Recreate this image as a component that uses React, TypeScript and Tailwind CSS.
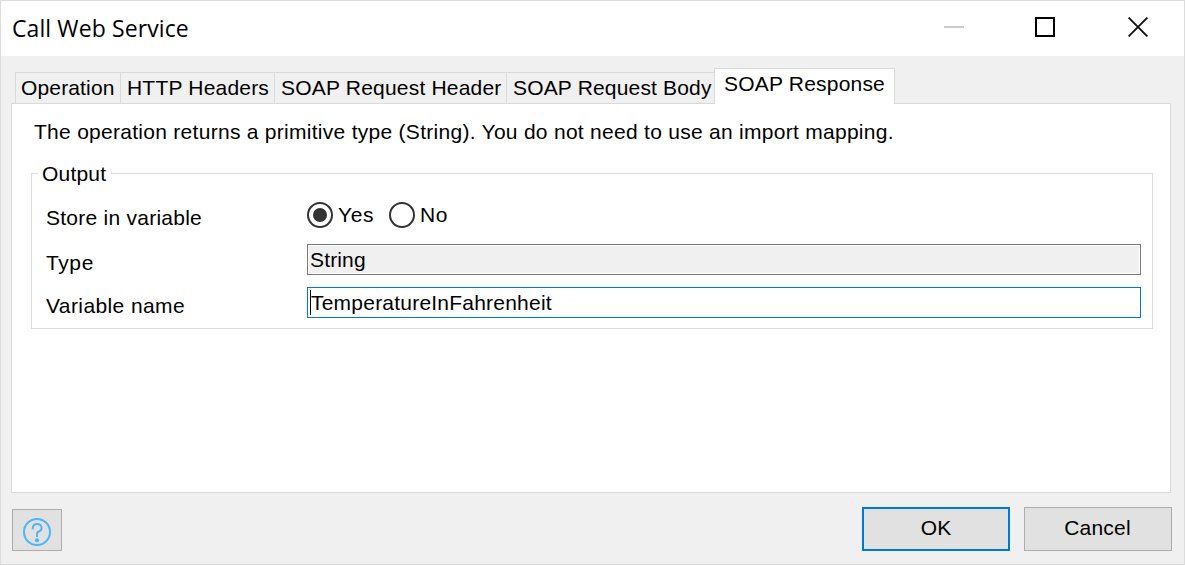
import { useState } from 'react';

const tabs = [
  { label: 'Operation', box: 'w-[106px] border-x pl-[5px] tracking-[0.15px]' },
  { label: 'HTTP Headers', box: 'w-[154px] border-r pl-[6px] tracking-[0.2px]' },
  { label: 'SOAP Request Header', box: 'w-[232px] border-r pl-[6px] tracking-[0.2px]' },
  { label: 'SOAP Request Body', box: 'w-[207px] pl-[6px] tracking-[0.17px]' },
];

function TitleBar() {
  return (
    <header className="flex h-[55px] shrink-0 items-start bg-white pl-[11px] pr-[36px]">
      <h1 className="mt-[11px] grow whitespace-nowrap font-['Open_Sans',sans-serif] text-[23px] leading-8 tracking-[0.1px]">
        Call Web Service
      </h1>
      <div className="flex pt-4">
        <button aria-label="Minimize" className="mr-[71px] flex h-5 w-5 items-center">
          <span className="block h-[2px] w-5 bg-[#cccccc]" />
        </button>
        <button aria-label="Maximize" className="mr-[73px] h-5 w-5 border-2 border-black" />
        <button aria-label="Close" className="h-5 w-5">
          <svg className="block" width="20" height="20" viewBox="0 0 20 20" stroke="#111" strokeWidth="1.9">
            <path d="M0.6 0.6L19.4 19.4M19.4 0.6L0.6 19.4" />
          </svg>
        </button>
      </div>
    </header>
  );
}

function TabStrip() {
  return (
    <nav className="flex h-9 items-end pl-1">
      {tabs.map((tab) => (
        <div key={tab.label} className={`mb-px h-[31px] whitespace-nowrap border-t border-[#dadada] pt-[3px] ${tab.box}`}>
          {tab.label}
        </div>
      ))}
      <div className="relative z-10 h-9 w-[181px] whitespace-nowrap border-x border-t border-[#dadada] bg-white pl-[9px] pt-[3px] tracking-[0.2px]">
        SOAP Response
      </div>
    </nav>
  );
}

function Radio({ checked, onSelect, label }: { checked: boolean; onSelect: () => void; label: string }) {
  return (
    <button role="radio" aria-checked={checked} onClick={onSelect} className="flex items-center gap-[5px]">
      <svg width="26" height="26" viewBox="0 0 26 26">
        <circle cx="13" cy="13" r="12" fill="white" stroke="#333" strokeWidth="2" />
        {checked && <circle cx="13" cy="13" r="7" fill="#333" />}
      </svg>
      <span className="tracking-[0.6px]">{label}</span>
    </button>
  );
}

export default function App() {
  const [store, setStore] = useState(true);
  return (
    <div className="flex h-[565px] w-[1185px] flex-col overflow-hidden border border-[#dcdcdc] bg-[#f0f0f0] font-['Liberation_Sans',Arial,sans-serif] text-[21px] leading-6 text-black">
      <TitleBar />
      <main className="flex grow flex-col px-[10px] pt-3">
        <TabStrip />
        <section className="-mt-px flex h-[390px] w-[1160px] flex-col border border-[#dadada] bg-white pl-[19px] pt-4">
          <p className="ml-[3px] whitespace-nowrap tracking-[0.28px]">
            The operation returns a primitive type (String). You do not need to use an import mapping.
          </p>
          <div className="mt-[29px] h-[156px] w-[1122px] border border-[#dcdcdc]">
            <div className="-mt-3 ml-[6px] w-[73px] bg-white pl-1 tracking-[0.2px]">Output</div>
            <div className="ml-[14px] mt-4 flex">
              <div className="w-[261px] pt-1 tracking-[0.25px]">Store in variable</div>
              <div className="flex h-[26px] gap-[15px]" role="radiogroup">
                <Radio label="Yes" checked={store} onSelect={() => setStore(true)} />
                <Radio label="No" checked={!store} onSelect={() => setStore(false)} />
              </div>
            </div>
            <div className="ml-[14px] mt-[14px] flex">
              <div className="w-[261px] pt-[7px] tracking-[0.6px]">Type</div>
              <div className="h-[31px] w-[834px] border border-[#7a7a7a] bg-white p-px">
                <div className="h-[27px] bg-[#f0f0f0] pl-px pt-[2px] tracking-[0.15px]">String</div>
              </div>
            </div>
            <div className="ml-[14px] mt-3 flex">
              <div className="w-[261px] pt-[7px] tracking-[0.4px]">Variable name</div>
              <div className="flex h-[31px] w-[834px] border border-[#0078d7] bg-white pl-[2px] pt-[3px]">
                <span className="-mt-px h-[25px] w-px bg-black" />
                <span className="tracking-[0.22px]">TemperatureInFahrenheit</span>
              </div>
            </div>
          </div>
        </section>
        <footer className="mt-[14px] flex items-end pl-px">
          <button aria-label="Help" className="flex h-[42px] w-[50px] items-center justify-center border border-[#adadad] bg-[#e1e1e1] pt-[4px]">
            <svg width="28" height="28" viewBox="0 0 28 28" fill="none" stroke="#4db5f8" strokeWidth="2">
              <circle cx="14" cy="14" r="13" />
              <path d="M9.8 11.3V10C9.8 7.4 11.6 5.9 14.1 5.9S18.6 7.6 18.6 10C18.6 12.3 17.4 13 15.8 13.5C14.5 13.9 14 14.4 14 15.5V19" />
              <circle cx="14" cy="22.3" r="2.1" fill="#4db5f8" stroke="none" />
            </svg>
          </button>
          <button className="ml-auto h-11 w-[148px] border-2 border-[#0078d7] bg-[#e1e1e1] pb-[2px]">OK</button>
          <button className="ml-[14px] mr-[2px] h-11 w-[148px] border border-[#adadad] bg-[#e1e1e1] pb-[2px] pr-px tracking-[0.2px]">Cancel</button>
        </footer>
      </main>
    </div>
  );
}
